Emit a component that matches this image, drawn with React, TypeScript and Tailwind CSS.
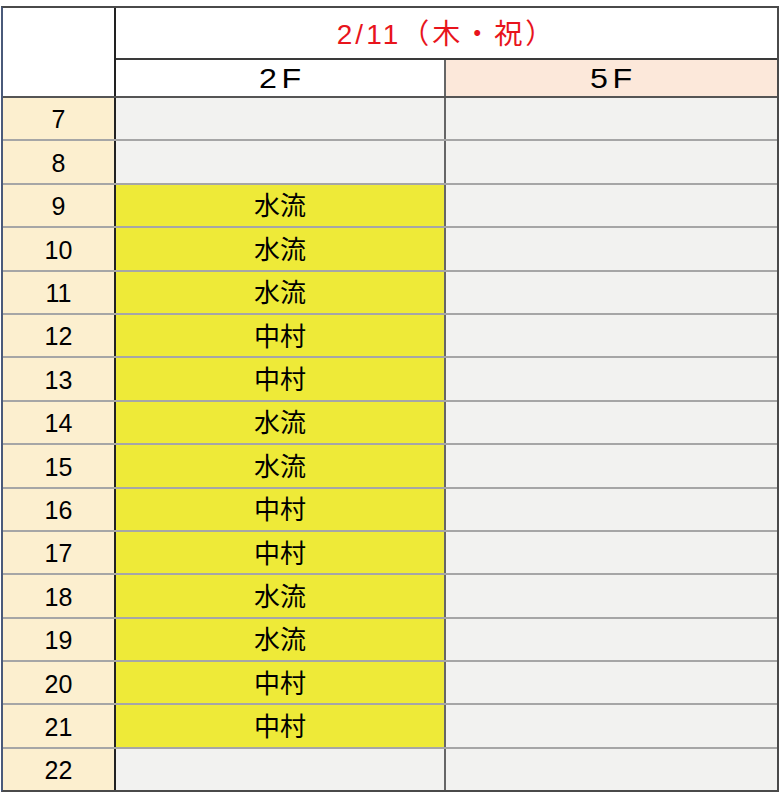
const rows: [number, string][] = [
  [7, ''], [8, ''], [9, '水流'], [10, '水流'], [11, '水流'], [12, '中村'], [13, '中村'],
  [14, '水流'], [15, '水流'], [16, '中村'], [17, '中村'], [18, '水流'], [19, '水流'],
  [20, '中村'], [21, '中村'], [22, ''],
]

const font = { fontFamily: '"Liberation Sans", "Noto Sans CJK JP", sans-serif' }

export default function App() {
  return (
    <div className="w-[780px] h-[800px] bg-white pt-[6px] pl-[1px]" style={font}>
      <div className="w-[778px] border-2 border-[#4a4a4a] border-l-[#4a5a7a] flex flex-col">
        <div className="flex">
          <div className="w-[113px] h-[88px] bg-white border-r-2 border-[#222] shrink-0" />
          <div className="flex-1 flex flex-col">
            <div className="h-[52px] flex items-center justify-center pt-[4px] text-[28px] text-[#e8141c] tracking-[3px] border-b-2 border-[#3a3a3a]">
              2/11（木・祝）
            </div>
            <div className="flex h-[36px]">
              <div className="w-[330px] flex items-center justify-center pt-[2px] text-[28px] tracking-[4px] pl-[4px] border-r-2 border-[#666] bg-white"><span className="inline-block scale-x-[1.15]">2F</span></div>
              <div className="flex-1 flex items-center justify-center pt-[2px] text-[28px] tracking-[4px] pl-[4px] bg-[#fce8da]"><span className="inline-block scale-x-[1.15]">5F</span></div>
            </div>
          </div>
        </div>
        {rows.map(([h, name], i) => (
          <div key={h} className={`flex h-[43.4px] border-t-2 ${i === 0 ? 'border-[#555]' : 'border-black/35'}`}>
            <div className="w-[113px] shrink-0 bg-[#fcefcf] border-r-2 border-[#222] flex items-center justify-center pt-[3px] text-[25px] text-black">{h}</div>
            <div className={`w-[330px] border-r-2 border-[#666] flex items-center justify-center pt-[3px] text-[26px] text-black ${name ? 'bg-[#eeea38]' : 'bg-[#f2f2f0]'}`}>{name}</div>
            <div className="flex-1 bg-[#f2f2f0]" />
          </div>
        ))}
      </div>
    </div>
  )
}
